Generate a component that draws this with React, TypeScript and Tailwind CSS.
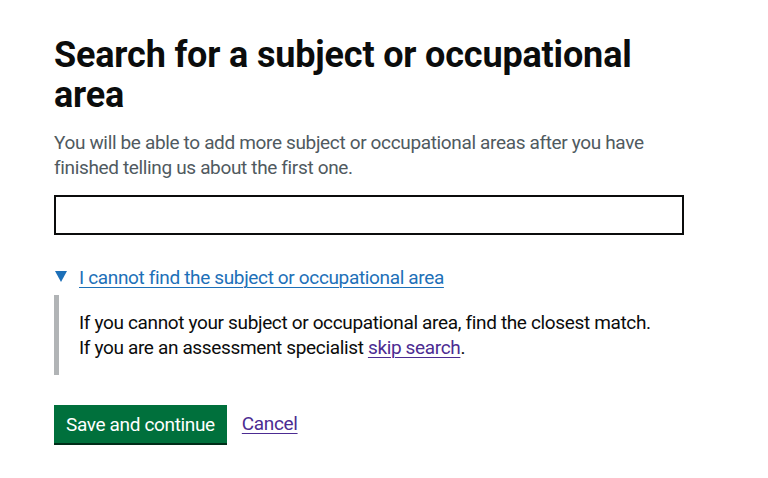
export default function App() {
  return (
    <div className="min-h-screen bg-white text-[#0b0c0c]" style={{ fontFamily: 'Roboto, "Liberation Sans", sans-serif' }}>
      <main className="pl-[54px] pr-[30px] pt-[35px]">
        <div className="w-[630px] tracking-[-0.35px]">
          <h1 className="text-[36px] leading-[40px] font-bold mb-[15px] tracking-[-0.17px]">
            Search for a subject or occupational area
          </h1>
          <div className="text-[19px] leading-[25px] text-[#505a5f] mb-[15px]">
            You will be able to add more subject or occupational areas after you have finished telling us about the first one.
          </div>
          <input
            type="text"
            className="block w-full h-[40px] border-2 border-[#0b0c0c] px-[5px] text-[19px] outline-none"
          />

          <div className="mt-[30px] text-[19px] leading-[25px]">
            <div className="relative pl-[25px] text-[#1d70b8] underline underline-offset-[3px] decoration-1 w-max">
              <span className="absolute left-[1px] top-[6px] w-0 h-0 border-l-[6px] border-r-[6px] border-t-[11px] border-l-transparent border-r-transparent border-t-[#1d70b8]" />
              I cannot find the subject or occupational area
            </div>
            <div className="mt-[5px] border-l-[5px] border-[#b1b4b6] pl-[20px] py-[15px]">
              <p>If you cannot your subject or occupational area, find the closest match.</p>
              <p>
                If you are an assessment specialist{' '}
                <a href="#" className="text-[#4c2c92] underline underline-offset-[3px] decoration-1">skip search</a>.
              </p>
            </div>
          </div>

          <div className="mt-[30px] flex items-center gap-[15px]">
            <button className="bg-[#00703c] text-white text-[19px] leading-[23px] px-[12px] pt-[8px] pb-[7px] shadow-[0_2px_0_#002d18]">
              Save and continue
            </button>
            <a href="#" className="text-[19px] text-[#4c2c92] underline underline-offset-[3px] decoration-1">Cancel</a>
          </div>
        </div>
      </main>
    </div>
  );
}
